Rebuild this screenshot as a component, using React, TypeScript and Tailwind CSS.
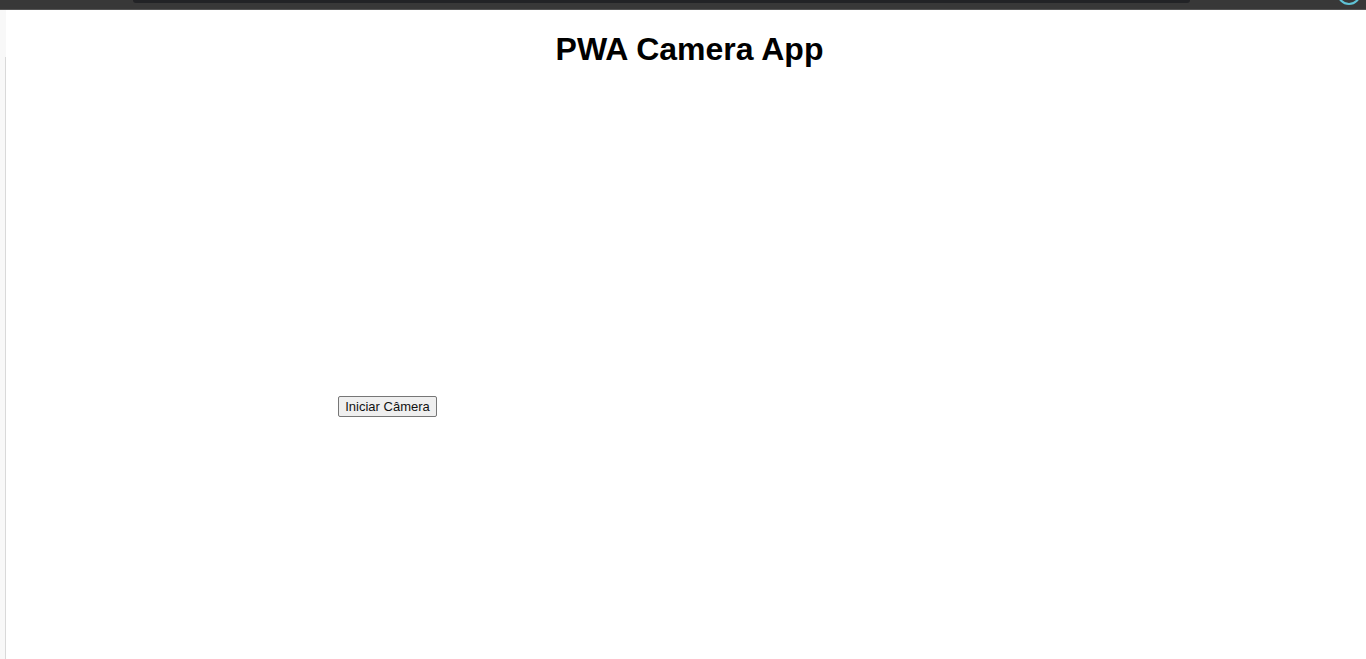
import React from "react";

export default function App() {
  return (
    <div className="flex h-[659px] w-[1366px] flex-col overflow-hidden bg-white font-['Liberation_Sans',Arial,sans-serif]">
      <div className="flex h-[10px] shrink-0 items-start border-b border-[#555555] bg-[#383838]">
        <div className="w-[133px]" />
        <div className="h-[3px] w-[1057px] rounded-b-[4px] bg-[#222326]" />
        <div className="flex-1" />
        <svg width="30" height="9" viewBox="0 0 30 9" className="mr-[2px] block">
          <circle cx="15" cy="-7" r="11" fill="none" stroke="#5fc3d6" strokeWidth="2" />
        </svg>
      </div>
      <div className="flex flex-1">
        <div className="flex w-[6px] flex-col">
          <div className="h-[47px] w-[6px] bg-[#f8f8f8]" />
          <div className="w-[6px] flex-1 border-r border-[#d9d9d9] bg-[#f8f8f8]" />
        </div>
        <div className="flex flex-1 flex-col">
          <h1 className="mt-[21px] pl-[7px] text-center text-[32px] font-bold leading-[37px] text-black">
            PWA Camera App
          </h1>
          <div className="mt-[326px] pl-[332px]">
            <button className="h-[21px] w-[99px] rounded-[2px] border border-[#767676] bg-[#efefef] px-0 text-[13px] leading-[15px] text-[#111]">
              Iniciar Câmera
            </button>
          </div>
        </div>
      </div>
    </div>
  );
}
